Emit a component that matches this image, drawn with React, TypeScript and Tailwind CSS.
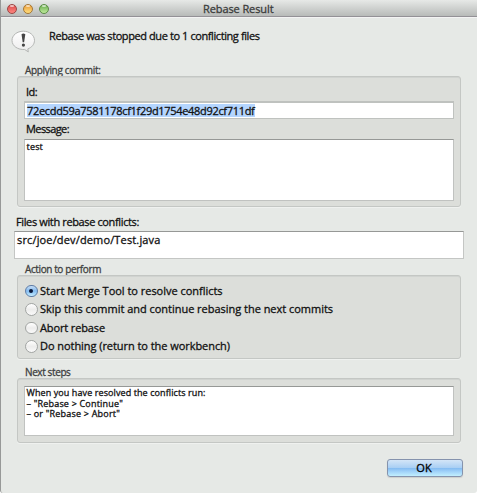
import { useLayoutEffect, useRef, useState, type ReactNode } from 'react';

/** A single line of text whose tracking is adjusted so that it spans `width` pixels. */
function Line({ text, width, className = '' }: { text: string; width: number; className?: string }) {
  const ref = useRef<HTMLSpanElement>(null);
  const [tracking, setTracking] = useState(0);
  useLayoutEffect(() => {
    const el = ref.current;
    if (!el) return;
    el.style.letterSpacing = '0px';
    const next = (width - el.getBoundingClientRect().width) / text.length;
    el.style.letterSpacing = `${next}px`;
    setTracking(next);
  }, [text, width]);
  return (
    <span ref={ref} className={`inline-block whitespace-pre ${className}`} style={{ letterSpacing: `${tracking}px` }}>
      {text}
    </span>
  );
}

function Group({ className, children }: { className: string; children?: ReactNode }) {
  return (
    <div
      className={`ml-[17px] w-[444px] rounded-[3px] border border-[#c4c7c4] bg-[#dcdeda] shadow-[inset_0_1px_0_#d0d3d0,0_1px_0_#eff1ef] ${className}`}
    >
      {children}
    </div>
  );
}

function Light({ tone }: { tone: string }) {
  return (
    <span className={`relative size-[10px] rounded-full border ${tone}`}>
      <span className="absolute top-0 left-[2px] h-[2px] w-[4px] rounded-full bg-white/60" />
    </span>
  );
}

function Radio({ label, width, checked = false }: { label: string; width: number; checked?: boolean }) {
  return (
    <div className="flex h-[18.5px] items-center">
      <span
        className={`mr-[2.5px] flex size-[12.5px] shrink-0 items-center justify-center rounded-full border ${
          checked
            ? 'border-[#5f7da6] bg-linear-to-b from-[#c5dcf4] via-[#83bbf0] to-[#c4edff]'
            : 'border-[#a2a5a3] bg-linear-to-b from-[#ffffff] via-[#ededec] to-[#fafafa]'
        }`}
      >
        {checked && <span className="size-[4px] rounded-full bg-[#0b1838]" />}
      </span>
      <Line text={label} width={width} className="text-[11px] leading-[18px]" />
    </div>
  );
}

export default function App() {
  return (
    <div className="flex h-[493px] w-[477px] flex-col overflow-hidden rounded-b-[3px] border-l border-[#979998] bg-[#e6e9e6] font-['Open_Sans','Noto_Sans',sans-serif] font-medium text-[#111111] [-webkit-text-stroke:0.3px]">
      <header className="flex h-[18px] shrink-0 items-start border-b border-[#f3f3f3] bg-linear-to-b from-[#e7e9e7] to-[#b5b8b6] shadow-[inset_0_-1px_0_#939196]">
        <div className="flex w-[202px] gap-[6px] pt-[4px] pl-[6px]">
          <Light tone="border-[#9b4744] bg-linear-to-b from-[#d94b4b] to-[#ff8580]" />
          <Light tone="border-[#a57735] bg-linear-to-b from-[#e89a36] to-[#ffdf7d]" />
          <Light tone="border-[#5b8c45] bg-linear-to-b from-[#69ad4e] to-[#bfeb9c]" />
        </div>
        <Line text="Rebase Result" width={70.5} className="text-[11px] leading-[17px] text-[#3b3c3b]" />
      </header>

      <div className="flex h-[47px] shrink-0 items-start">
        <svg className="mt-[12px] ml-[10px] size-[25px] shrink-0" viewBox="0 0 25 25">
          <defs>
            <linearGradient id="bubble" x1="0" y1="0" x2="0" y2="1">
              <stop offset="0" stopColor="#fff" />
              <stop offset="1" stopColor="#ececec" />
            </linearGradient>
          </defs>
          <path
            d="M12.3 1.2C18.4 1.2 23.5 5.2 23.5 10.4c0 4-2.9 7.2-6.7 8.5l.5 3-3.6-2.4C7.1 20 1 16.200 1 10.400 1 5.200 6.100 1.200 12.300 1.200z"
            fill="url(#bubble)"
            stroke="#b4b6b4"
            strokeWidth="1"
          />
          <path d="M10.500 4.200q1.900-1.400 3.800 0l-1.200 8h-1.400z" fill="#444" />
          <circle cx="12.400" cy="15.100" r="1.600" fill="#444" />
        </svg>
        <Line
          text="Rebase was stopped due to 1 conflicting files"
          width={210.5}
          className="mt-[10px] ml-[13px] text-[11px] leading-[16px]"
        />
      </div>

      <div className="-ml-px flex flex-col">
        <div className="flex h-[11px] items-center pl-[25px]">
          <Line text="Applying commit:" width={75.5} className="text-[10px] leading-[11px] text-[#3f413f]" />
        </div>
        <Group className="h-[131px] px-[6px]">
          <div className="flex h-[24px] items-end pl-[2px]">
            <Line text="Id:" width={11} className="text-[11px] leading-[19px]" />
          </div>
          <div className="flex h-[18px] w-[430px] items-center border border-t-2 border-[#bfc2bf] bg-white pl-[2px]">
            <span className="flex h-[13px] items-center bg-[#b4d5fe]">
              <Line text="72ecdd59a7581178cf1f29d1754e48d92cf711df" width={227.5} className="text-[11px] leading-[13px]" />
            </span>
          </div>
          <div className="flex h-[20px] items-center pl-[2px]">
            <Line text="Message:" width={43} className="text-[11px] leading-[20px]" />
          </div>
          <div className="flex h-[62px] w-[430px] items-start border border-[#c0c2c0] border-t-[#969896] bg-white pl-[1.5px]">
            <Line text="test" width={16.5} className="text-[9px] leading-[13px]" />
          </div>
        </Group>

        <div className="flex h-[24px] items-center pt-[5px] pl-[16px]">
          <Line text="Files with rebase conflicts:" width={123} className="text-[11px] leading-[16px]" />
        </div>
        <div className="ml-[14px] flex h-[28px] w-[450px] items-start border border-[#c4c6c4] border-t-[#969896] bg-white pl-[2px]">
          <Line text="src/joe/dev/demo/Test.java" width={143.5} className="text-[11px] leading-[15px]" />
        </div>

        <div className="flex h-[16px] items-center pt-[4px] pl-[25px]">
          <Line text="Action to perform" width={76} className="text-[10px] leading-[12px] text-[#3f413f]" />
        </div>
        <Group className="flex h-[84px] flex-col pt-[5.500px] pl-[7px]">
          <Radio label="Start Merge Tool to resolve conflicts" width={182.5} checked />
          <Radio label="Skip this commit and continue rebasing the next commits" width={293} />
          <Radio label="Abort rebase" width={65} />
          <Radio label="Do nothing (return to the workbench)" width={190} />
        </Group>

        <div className="flex h-[19px] items-center pt-[7px] pl-[25px]">
          <Line text="Next steps" width={45.5} className="text-[10px] leading-[12px] text-[#3f413f]" />
        </div>
        <Group className="h-[65px] px-[6px] pt-[7px]">
          <div className="flex h-[50px] w-[430px] flex-col items-start border border-[#c0c2c0] border-t-[#969896] bg-white pt-px pl-[1.5px]">
            <Line text="When you have resolved the conflicts run:" width={179} className="text-[9px] leading-[10.5px]" />
            <Line text={'– "Rebase > Continue"'} width={96.5} className="text-[9px] leading-[10.5px]" />
            <Line text={'– or "Rebase > Abort"'} width={93.5} className="text-[9px] leading-[10.5px]" />
          </div>
        </Group>

        <button className="mt-[16px] mr-[14px] flex h-[18px] w-[76px] items-center justify-center self-end rounded-[3px] border border-[#8593ad] bg-[linear-gradient(180deg,#d3e5f7_0%,#a9cff4_48%,#82baf1_50%,#a4d5fa_75%,#c2effe_100%)] pr-[2px] shadow-[0_1px_1px_#cdd0cd]">
          <Line text="OK" width={15.5} className="text-[11px] leading-[16px] text-black" />
        </button>
      </div>
    </div>
  );
}
